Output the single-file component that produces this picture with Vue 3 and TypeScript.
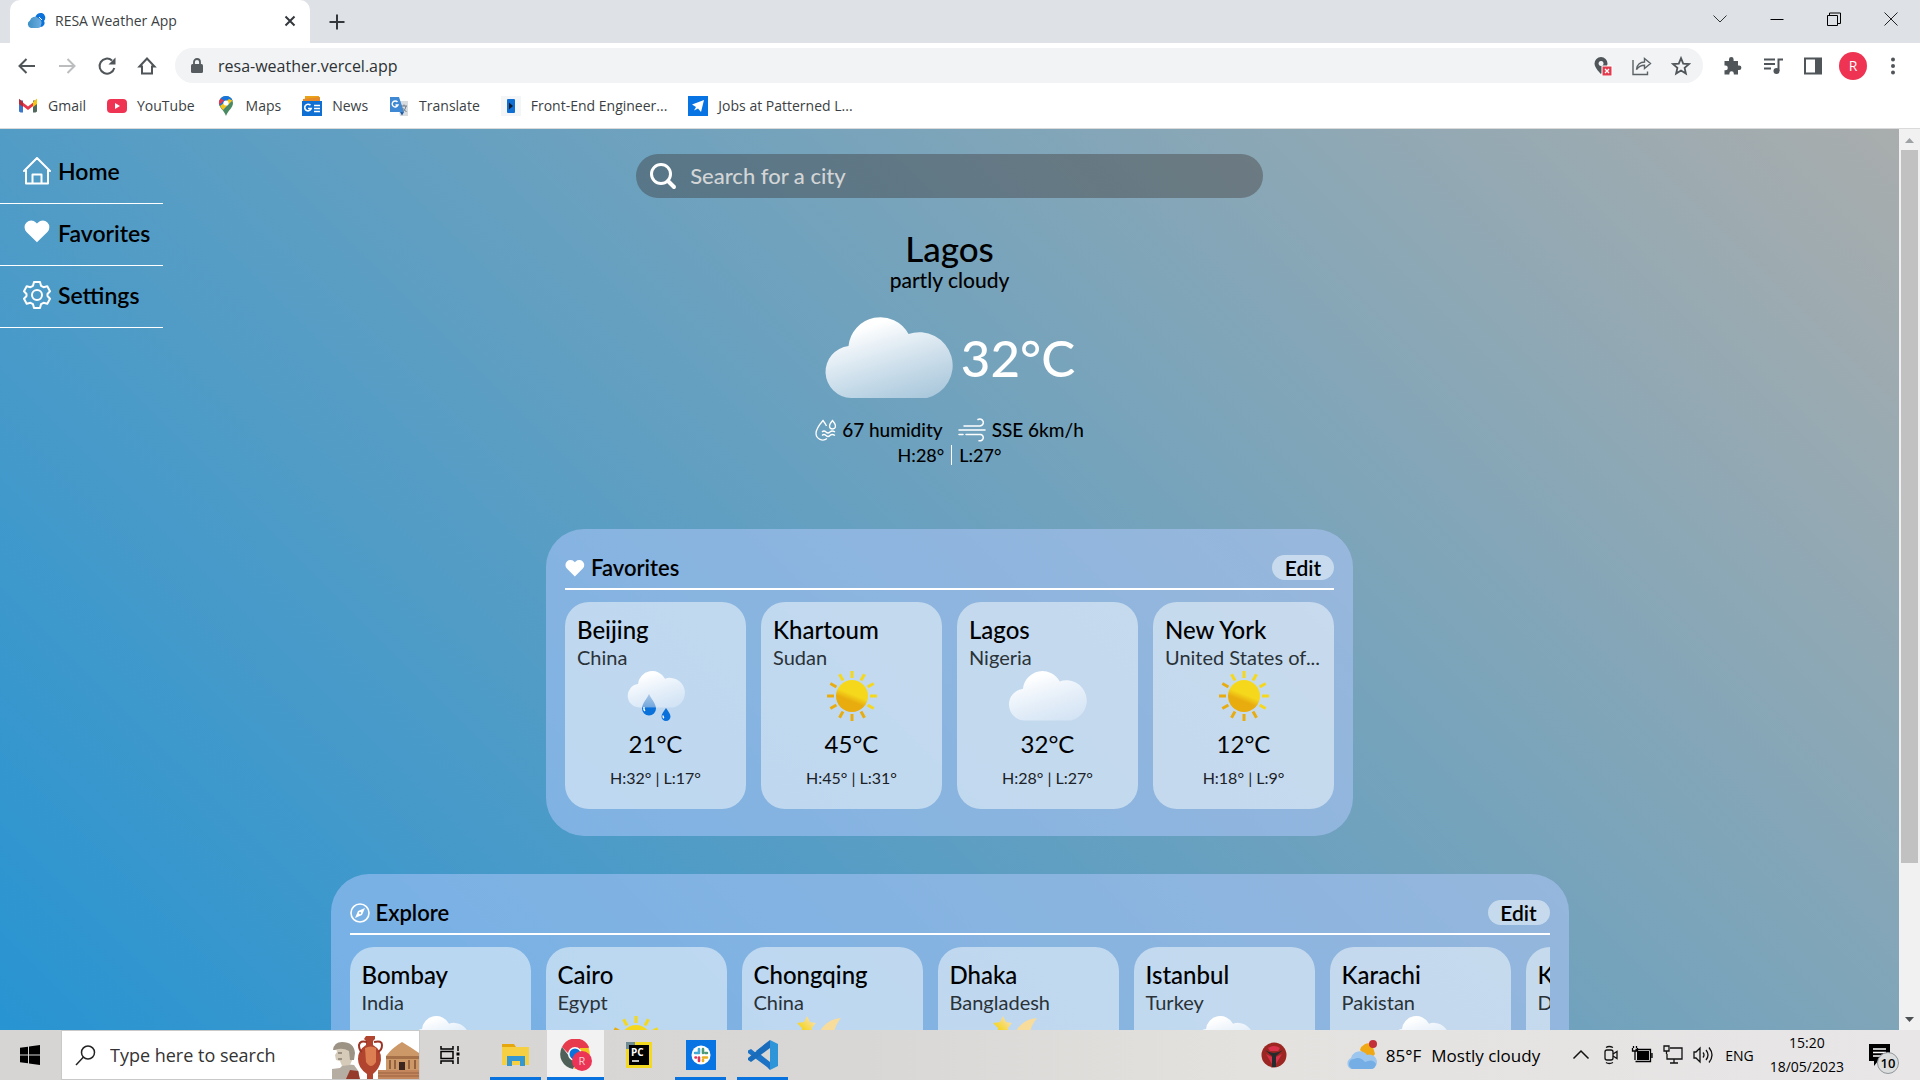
<script setup lang="ts">
import { ref } from 'vue'

type Sky = 'rain' | 'sun' | 'cloud' | 'night'

interface City {
  name: string
  country: string
  sky: Sky
  temp: number
  high: number
  low: number
}

const skyBox: Record<Sky, { w: number; h: number }> = {
  rain: { w: 58, h: 50 },
  sun: { w: 50, h: 50 },
  cloud: { w: 79, h: 50 },
  night: { w: 70, h: 50 },
}

const search = ref('')

const bookmarks = [
  { icon: 'gmail', label: 'Gmail' },
  { icon: 'youtube', label: 'YouTube' },
  { icon: 'maps', label: 'Maps' },
  { icon: 'news', label: 'News' },
  { icon: 'translate', label: 'Translate' },
  { icon: 'frontend', label: 'Front-End Engineer...' },
  { icon: 'jobs', label: 'Jobs at Patterned L...' },
]

const navItems = [
  { icon: 'house', label: 'Home' },
  { icon: 'heart', label: 'Favorites' },
  { icon: 'gear', label: 'Settings' },
]

const panels: { title: string; icon: string; size: string; cities: City[] }[] = [
  {
    title: 'Favorites',
    icon: 'heart',
    size: 'narrow',
    cities: [
      { name: 'Beijing', country: 'China', sky: 'rain', temp: 21, high: 32, low: 17 },
      { name: 'Khartoum', country: 'Sudan', sky: 'sun', temp: 45, high: 45, low: 31 },
      { name: 'Lagos', country: 'Nigeria', sky: 'cloud', temp: 32, high: 28, low: 27 },
      { name: 'New York', country: 'United States of...', sky: 'sun', temp: 12, high: 18, low: 9 },
    ],
  },
  {
    title: 'Explore',
    icon: 'compass',
    size: 'wide',
    cities: [
      { name: 'Bombay', country: 'India', sky: 'rain', temp: 31, high: 33, low: 28 },
      { name: 'Cairo', country: 'Egypt', sky: 'sun', temp: 30, high: 33, low: 19 },
      { name: 'Chongqing', country: 'China', sky: 'night', temp: 24, high: 29, low: 20 },
      { name: 'Dhaka', country: 'Bangladesh', sky: 'night', temp: 30, high: 36, low: 26 },
      { name: 'Istanbul', country: 'Turkey', sky: 'rain', temp: 18, high: 20, low: 13 },
      { name: 'Karachi', country: 'Pakistan', sky: 'rain', temp: 31, high: 34, low: 28 },
      { name: 'Kinshasa', country: 'DR Congo', sky: 'cloud', temp: 29, high: 31, low: 22 },
    ],
  },
]

const rays = Array.from({ length: 12 }, (_, i) => i * 30)
</script>

<template>
  <div class="screen">
    <svg class="defs" width="0" height="0" aria-hidden="true">
      <defs>
        <linearGradient id="g-cloud" x1="0.3" y1="0" x2="0.8" y2="1">
          <stop offset="0.1" stop-color="#fff" />
          <stop offset="1" stop-color="#e4eefa" stop-opacity="0.5" />
        </linearGradient>
        <linearGradient id="g-sun" x1="0.7" y1="0" x2="0.3" y2="1">
          <stop offset="0.45" stop-color="#f5d81c" />
          <stop offset="0.65" stop-color="#e8ac0e" />
        </linearGradient>
        <linearGradient id="g-drop" x1="0" y1="0" x2="0" y2="1">
          <stop offset="0" stop-color="#a9c8e6" />
          <stop offset="0.58" stop-color="#76a9de" />
          <stop offset="0.66" stop-color="#0a70da" />
        </linearGradient>
        <linearGradient id="g-star" x1="0" y1="1" x2="1" y2="0">
          <stop offset="0.2" stop-color="#f5d40e" />
          <stop offset="0.8" stop-color="#f8dfa0" />
        </linearGradient>
        <linearGradient id="g-fav" x1="0" y1="0" x2="1" y2="0">
          <stop offset="0" stop-color="#3c8fc4" />
          <stop offset="1" stop-color="#6faee0" />
        </linearGradient>
      </defs>
      <path id="cloud-shape" fill="url(#g-cloud)" d="M27 81A26.100 26.100 0 0 1 24.500 29A32 32 0 0 1 84.500 17A33.350 33.350 0 1 1 103 81Z" />
      <g id="sun-shape">
        <path v-for="r in rays" :key="r" d="M25 0V7" stroke-width="3" :transform="`rotate(${r} 25 25)`" :stroke="r > 120 && r < 330 ? '#e8ac0e' : '#f5d81c'" />
        <circle cx="25" cy="25" r="16" fill="url(#g-sun)" />
      </g>
      <path id="heart-shape" d="M12 22.500L2.300 12.900A6.200 6.200 0 0 1 2.300 4.200A6.200 6.200 0 0 1 11 4.200L12 5.200L13 4.200A6.200 6.200 0 0 1 21.700 4.200A6.200 6.200 0 0 1 21.700 12.900Z" />
    </svg>

    <header class="browser">
      <div class="tabstrip">
        <div class="tab">
          <svg width="20" height="20" viewBox="0 0 20 20"><path fill="#0b72dc" d="M9 8A6 6 0 0 1 16 2A5 5 0 0 1 18 10A4 4 0 0 1 15 16H8Z" /><path fill="url(#g-fav)" d="M5 17A4 4 0 0 1 4 9.500A5 5 0 0 1 12 7A5 5 0 0 1 15 14A3 3 0 0 1 12 17Z" /><path d="M13 6l3 3" stroke="#fff" /></svg>
          <span class="tab-title">RESA Weather App</span>
          <button class="bare" aria-label="Close tab"><svg width="14" height="14" viewBox="0 0 14 14"><path d="M2.500 2.500l9 9M11.500 2.500l-9 9" stroke="#34383c" stroke-width="2" /></svg></button>
        </div>
        <button class="bare newtab" aria-label="New tab"><svg width="18" height="18" viewBox="0 0 18 18"><path d="M9 1.500v15M1.500 9h15" stroke="#34383c" stroke-width="2" /></svg></button>
        <div class="window-buttons">
          <button class="bare" aria-label="Search tabs"><svg width="14" height="14" viewBox="0 0 14 14"><path d="M0.500 3.500L7 10L13.500 3.500" fill="none" stroke="#333" /></svg></button>
          <button class="bare" aria-label="Minimize"><svg width="14" height="14" viewBox="0 0 14 14"><path d="M0.500 7.500h13" stroke="#000" /></svg></button>
          <button class="bare" aria-label="Restore"><svg width="14" height="14" viewBox="0 0 14 14"><path d="M0.500 3.500h10v10h-10zM2.500 3.500v-2.500h11v10.500h-3" fill="none" stroke="#000" /></svg></button>
          <button class="bare" aria-label="Close window"><svg width="14" height="14" viewBox="0 0 14 14"><path d="M0.500 0.500l13 13M13.500 0.500l-13 13" stroke="#222" /></svg></button>
        </div>
      </div>

      <div class="toolbar">
        <button class="bare" aria-label="Back"><svg width="20" height="20" viewBox="0 0 20 20"><path d="M18 10H3M9.500 3L2.500 10l7 7" fill="none" stroke="#4f5559" stroke-width="2" /></svg></button>
        <button class="bare" aria-label="Forward"><svg width="20" height="20" viewBox="0 0 20 20"><path d="M2 10h15M10.500 3l7 7l-7 7" fill="none" stroke="#bbbdbf" stroke-width="2" /></svg></button>
        <button class="bare" aria-label="Reload"><svg width="20" height="20" viewBox="0 0 20 20"><path d="M17.300 12A7.500 7.500 0 1 1 15 4.500" fill="none" stroke="#4f5559" stroke-width="2" /><path d="M18.500 1.500v7h-7z" fill="#4f5559" /></svg></button>
        <button class="bare" aria-label="Home"><svg width="20" height="20" viewBox="0 0 20 20"><path d="M2.500 10.500L10 2.500l7.500 8H15V17.500H5V10.500Z" fill="none" stroke="#4f5559" stroke-width="2" /></svg></button>
        <div class="address">
          <svg width="12" height="16" viewBox="0 0 12 16"><rect y="6" width="12" height="9" rx="1.500" fill="#555b5f" /><path d="M3 6V4a3 3 0 0 1 6 0v2" fill="none" stroke="#555b5f" stroke-width="1.800" /></svg>
          <input class="url" aria-label="Address" value="resa-weather.vercel.app" />
          <svg width="20" height="20" viewBox="0 0 20 20"><path fill="#4f5559" fill-rule="evenodd" d="M8 1a6.500 6.500 0 0 1 6.500 6.500C14.500 12 8 18 8 18S1.500 12 1.500 7.500A6.500 6.500 0 0 1 8 1ZM8 5a2.500 2.500 0 1 0 .1 0Z" /><rect x="9" y="10" width="10" height="10" fill="#e33b4e" stroke="#fff" /><path d="M12 13l4 4M16 13l-4 4" stroke="#fff" stroke-width="1.300" /></svg>
          <svg width="20" height="20" viewBox="0 0 20 20"><path d="M1 4V18.500H15.500V15.500M4.500 13.500C5 8.500 8.500 6 12.500 6V2.500L18.500 7.500L12.500 12.500V9.200C9 9.200 6.500 10.500 4.500 13.500Z" fill="none" stroke="#5b6165" stroke-width="1.400" /></svg>
          <svg width="20" height="20" viewBox="0 0 20 20"><path d="M10 2.200l2.200 5.400 5.800.5-4.400 3.800 1.300 5.700L10 14.600 5.100 17.600l1.300-5.700L2 8.100l5.800-.5Z" fill="none" stroke="#4f5559" stroke-width="1.800" /></svg>
        </div>
        <div class="extensions">
          <svg width="20" height="20" viewBox="0 0 20 20"><path fill="#4f5559" d="M1.500 5H6V3.200a2.300 2.300 0 0 1 4.600 0V5H15v4.500h1.200a2.200 2.200 0 0 1 0 4.400H15V18.500h-4.200v-1a2.200 2.200 0 0 0-4.400 0v1H1.500v-4.300h1a2.300 2.300 0 0 0 0-4.600h-1Z" /></svg>
          <svg width="20" height="20" viewBox="0 0 20 20"><path d="M1 3.500h11M1 8h11M1 12.500h7M15.500 15V3.500H20" stroke="#4f5559" stroke-width="2" fill="none" /><circle cx="13.500" cy="15" r="3" fill="#4f5559" /></svg>
          <svg width="20" height="20" viewBox="0 0 20 20"><path d="M2 2.500h16v15H2Z" fill="none" stroke="#4f5559" stroke-width="2" /><path d="M12 2h6v16h-6z" fill="#4f5559" /></svg>
          <button class="avatar">R</button>
          <svg width="20" height="20" viewBox="0 0 20 20" fill="#4f5559"><circle cx="10" cy="3.500" r="2" /><circle cx="10" cy="10" r="2" /><circle cx="10" cy="16.500" r="2" /></svg>
        </div>
      </div>

      <nav class="bookmarks" aria-label="Bookmarks">
        <a v-for="b in bookmarks" :key="b.label" href="#" class="bookmark">
          <svg width="20" height="20" viewBox="0 0 20 20">
            <template v-if="b.icon === 'gmail'"><path d="M1 3.500L10 10.500L19 3.500V7L10 14L1 7Z" fill="#e5364a" /><path d="M1 4.500h4v12H2.500L1 15.500Z" fill="#3b78c9" /><path d="M15 4.500h4v11l-1.500 1H15Z" fill="#51685c" /><path d="M15 6l4-3.500V8l-4 3Z" fill="#f3c516" /><path d="M5 6L1 2.800V8l4 3Z" fill="#b52b38" /></template>
            <template v-else-if="b.icon === 'youtube'"><rect y="3" width="20" height="14" rx="4" fill="#ee3452" /><path d="M8 7v6l5-3z" fill="#fff" /></template>
            <template v-else-if="b.icon === 'maps'"><path d="M10 0a7 7 0 0 1 7 7c0 5-5 7-7 13C8 14 3 12 3 7a7 7 0 0 1 7-7Z" fill="#4a8a62" /><path d="M10 0a7 7 0 0 1 6.500 4.500L9 13 3.500 9.500C2 5 5 0 10 0Z" fill="#1774dc" /><path d="M3.300 9L8 4.500 4.500 2.500A7 7 0 0 0 3.300 9Z" fill="#e5364a" /><path d="M4 10l9-7 3.500 1.500L7 14Z" fill="#f3c516" /><circle cx="10" cy="7" r="2.600" fill="#fff" /></template>
            <template v-else-if="b.icon === 'news'"><path d="M3 0h14v6H3z" fill="#eaa319" /><path d="M1 3l17-2v6H1z" fill="#e58a28" /><path d="M0 5h20v15H0z" fill="#0f6fd2" /><path d="M8.500 9.300a3.300 3.300 0 1 0 .7 3.200H6M12 9.500h6M12 12.500h6M12 15.500h6" stroke="#fff" stroke-width="1.600" fill="none" /></template>
            <template v-else-if="b.icon === 'translate'"><path d="M8 5h11v15H11Z" fill="#d9dcdf" /><path d="M1 1h9l5 15H1z" fill="#3e88d4" /><path d="M11 16h4l-2 3.500z" fill="#1b5aa5" /><path d="M8.500 6a3 3 0 1 0 .5 3H6.500" stroke="#fff" stroke-width="1.400" fill="none" /><path d="M12 10h6M15 8.500V10M17 10c-.5 3-2 5-3.500 6M13.500 12l4 4" stroke="#6d7d89" fill="none" /></template>
            <template v-else-if="b.icon === 'frontend'"><rect width="20" height="20" fill="#f4f5f6" /><rect x="6" y="3" width="8" height="14" rx="1" fill="#0f6fd2" /><path d="M8 6.500L12 10L8 13.500Z" fill="#0b1a2c" /></template>
            <template v-else><rect width="20" height="20" fill="#0874e3" /><path d="M16 4L4 8.500l4 2.500-2 3.500 4-2 3 3.500Z" fill="#fff" /></template>
          </svg>
          {{ b.label }}
        </a>
      </nav>
    </header>

    <div class="viewport">
      <div class="page">
        <nav class="sidenav" aria-label="Main">
          <a v-for="n in navItems" :key="n.label" href="#">
            <svg width="28" height="28" viewBox="0 0 28 28" fill="none" stroke="#fff" stroke-width="2" stroke-linejoin="round" stroke-linecap="round">
              <path v-if="n.icon === 'house'" d="M1 14L14 1L27 14M3 13V26.500H25V13M9.500 26V17.500h9V26" />
              <use v-else-if="n.icon === 'heart'" href="#heart-shape" fill="#fff" stroke="none" transform="translate(1 -1) scale(1.080)" />
              <template v-else>
                <circle cx="14" cy="14" r="5" />
                <path d="M11 1H17L18 4.800L20.500 6.200L24.300 5.200L27 10.300L24.500 13V15L27 17.700L24.300 22.800L20.500 21.800L18 23.200L17 27H11L10 23.200L7.500 21.800L3.700 22.800L1 17.700L3.500 15V13L1 10.300L3.700 5.200L7.500 6.200L10 4.800Z" />
              </template>
            </svg>
            {{ n.label }}
          </a>
        </nav>

        <main class="content">
          <label class="search">
            <svg width="28" height="28" viewBox="0 0 28 28" fill="none" stroke="#fff" stroke-linecap="round"><circle cx="12" cy="12" r="9.500" stroke-width="3" /><path d="M19 19l6 6" stroke-width="4" /></svg>
            <input v-model="search" aria-label="Search for a city" placeholder="Search for a city" />
          </label>

          <section class="current">
            <h1>Lagos</h1>
            <p class="cond">partly cloudy</p>
            <div class="now">
              <svg width="129" height="81" viewBox="0 0 129 81"><use href="#cloud-shape" /></svg>
              <span>32°C</span>
            </div>
            <div class="facts">
              <span class="fact">
                <svg width="21" height="22" viewBox="0 0 21 22" fill="none" stroke="#fff" stroke-width="1.300"><path d="M11.500 7C10 4 8 1.500 8 1.500S1 9.500 1 14.500A6.800 6.800 0 0 0 12 19.500M17.500 1.500s-3 3.500-3 5.500a3 3 0 0 0 6 0c0-2-3-5.500-3-5.500ZM7 13q2-2 4 0t4 0 5 0M7 16.500q2-2 4 0t4 0 5 0" /></svg>
                67 humidity
              </span>
              <span class="fact">
                <svg width="28" height="24" viewBox="0 0 28 24" fill="none" stroke="#fff" stroke-width="1.500" stroke-linecap="round"><path d="M6 8H22a3.500 3.500 0 1 0-2-6.500M1 12H27M1 16.500h4M8 16.500h15a3.200 3.200 0 1 1-2 6.200" /></svg>
                SSE 6km/h
              </span>
            </div>
            <div class="range"><span>H:28°</span><span>L:27°</span></div>
          </section>

          <section v-for="p in panels" :key="p.title" class="panel" :class="p.size">
            <header>
              <svg width="20" height="20" viewBox="0 0 20 20">
                <use v-if="p.icon === 'heart'" href="#heart-shape" fill="#fff" transform="scale(0.820)" />
                <template v-else><circle cx="10" cy="10" r="9" fill="none" stroke="#fff" stroke-width="1.600" /><path fill="#fff" fill-rule="evenodd" d="M15 5L12 12L5 15L8 8ZM10 9a1 1 0 1 0 .1 0Z" /></template>
              </svg>
              <h2>{{ p.title }}</h2>
              <button>Edit</button>
            </header>
            <div class="cards">
              <article v-for="c in p.cities" :key="c.name" class="card">
                <h3>{{ c.name }}</h3>
                <p class="country">{{ c.country }}</p>
                <svg class="sky" :width="skyBox[c.sky].w" :height="skyBox[c.sky].h" :viewBox="`0 0 ${skyBox[c.sky].w} ${skyBox[c.sky].h}`">
                  <use v-if="c.sky === 'cloud'" href="#cloud-shape" transform="scale(0.612)" />
                  <use v-else-if="c.sky === 'sun'" href="#sun-shape" />
                  <template v-else-if="c.sky === 'rain'">
                    <use href="#cloud-shape" transform="scale(0.450)" />
                    <path fill="url(#g-drop)" d="M22 23C25 29 29 33 29 37.500A7 7 0 0 1 15 37.500C15 33 19 29 22 23Z" />
                    <path fill="#0a70da" d="M39 37C41 40 43.500 43 43.500 45.500A4.500 4.500 0 0 1 34.500 45.500C34.500 43 37 40 39 37Z" />
                    <path d="M17 36q-.5 3 1 4M36 44.500q0 2 1 2.500" stroke="#fff" stroke-width="1.500" fill="none" />
                  </template>
                  <template v-else>
                    <path fill="url(#g-star)" d="M10 0l3 6 6 1-4 5 1 7-6-3-6 3 1-7-5-5 7-1Z" />
                    <path fill="#f8dc9c" d="M44 2C30 3 20 14 20 27C20 40 30 50 43 50C52 50 60 45 63 37C40 42 28 22 44 2Z" />
                  </template>
                </svg>
                <p class="temp">{{ c.temp }}°C</p>
                <p class="hilo">H:{{ c.high }}° | L:{{ c.low }}°</p>
              </article>
            </div>
          </section>
        </main>
      </div>

      <div class="scrollbar" aria-hidden="true">
        <svg width="21" height="20" viewBox="0 0 21 20"><path d="M6 14h9l-4.500-5z" fill="#9ea2a5" /></svg>
        <div class="track"><div class="thumb"></div></div>
        <svg width="21" height="20" viewBox="0 0 21 20"><path d="M6 7h9l-4.500 5z" fill="#4d5154" /></svg>
      </div>
    </div>

    <footer class="taskbar">
      <button class="bare start" aria-label="Start"><svg width="20" height="20" viewBox="0 0 20 20"><path d="M0 2.800L8 1.700V9.500H0ZM9 1.500L20 0v9.500H9ZM0 10.500h8v7.800L0 17.200ZM9 10.500h11V20L9 18.500Z" /></svg></button>
      <label class="tasksearch">
        <svg width="21" height="21" viewBox="0 0 21 21" fill="none" stroke="#222" stroke-width="1.500"><circle cx="13" cy="7.500" r="6.500" /><path d="M8.500 12L1 20" /></svg>
        <input aria-label="Taskbar search" placeholder="Type here to search" />
        <svg class="art" width="87" height="43" viewBox="0 0 87 43">
          <path d="M0 43V33L8 32L12 28L22 29L27 36V43Z" fill="#b5aca2" /><path d="M14 43l4-9 8 1 2 8Z" fill="#963b2c" />
          <path d="M4 12L20 10L21 22L18 29L10 30L8 25L4 24L3 19L5 16Z" fill="#d6cbb9" /><path d="M1 14Q2 6 10 6Q22 6 23 17L22 24L18 24L17 15Q10 11 3 14Z" fill="#9d9385" /><path d="M6 17h4M6 23h4" stroke="#5f574d" />
          <path d="M34 0h9v3l-2 2v4q9 5 8 15-1 8-8 14v5h-6v-5q-9-6-9-15 0-9 8-14V5l-2-2Z" fill="#b1442e" /><path d="M33 12q6-3 11 0v14q-5 8-10 0Z" fill="#dc7d52" /><path d="M35 6q-7-2-8 3 0 5 3 7M42 6q8-2 8 3 0 5-4 7" fill="none" stroke="#9b3424" stroke-width="2" />
          <path d="M54 20Q60 12 70 6Q80 12 87 17V43H54Z" fill="#cd9868" /><path d="M54 20h33v3H54z" fill="#a56f47" /><path d="M58 24v9M63 24v9M77 24v9M83 24v9" stroke="#93613e" stroke-width="2" /><path d="M67 26h6v8h-6z" fill="#3a2520" /><path d="M46 34h41v9H46z" fill="#c4875d" /><path d="M46 37h41M46 40h41" stroke="#99603f" />
        </svg>
      </label>
      <div class="apps">
        <button class="app taskview" aria-label="Task view"><svg width="20" height="20" viewBox="0 0 20 20" fill="none" stroke="#000" stroke-width="1.500"><path d="M1 1v3h12V1M1 19v-3h12v3M1 6.500h12v7H1ZM18 1v5M18 12v7" /><path d="M16.500 7.500h3v3h-3z" fill="#000" stroke="none" /></svg></button>
        <button class="app running" aria-label="File Explorer"><svg width="28" height="24" viewBox="0 0 28 24"><path d="M0 1h12l2 3v5H0z" fill="#e6a70e" /><path d="M0 4h27v18H0z" fill="#f7cf43" /><path d="M5 23V13h18v10h-5v-5h-8v5Z" fill="#3597d1" /></svg></button>
        <button class="app running active" aria-label="Chrome">
          <svg width="32" height="32" viewBox="0 0 32 32"><path d="M2 8A15 15 0 0 1 29 8L28 10H15L8 14Z" fill="#e83a4d" /><path d="M2 8A15 15 0 0 0 13 30L17 21L9 17Z" fill="#4f6058" /><path d="M28.500 9A15 15 0 0 1 14 30L20 19L20 9Z" fill="#f4c91d" /><circle cx="15" cy="15" r="7" fill="#fff" /><circle cx="15" cy="15" r="5.500" fill="#0b72dc" /><circle cx="22" cy="22" r="10" fill="#ec3556" /><text x="22" y="26" font-family="Open Sans, sans-serif" font-size="11" text-anchor="middle" fill="#f5cdd3">R</text></svg>
        </button>
        <button class="app" aria-label="PyCharm"><svg width="26" height="26" viewBox="0 0 26 26"><path d="M0 0H26V26H0Z" fill="#f3d922" /><path d="M0 0h9v7H0z" fill="#6d8c93" /><rect x="3" y="3" width="20" height="20" fill="#000" /><text x="5" y="14" font-family="Open Sans, sans-serif" font-weight="700" font-size="10" fill="#fff">PC</text><path d="M6 19h7" stroke="#fff" stroke-width="1.500" /></svg></button>
        <button class="app running" aria-label="Slack"><svg width="30" height="30" viewBox="0 0 30 30"><rect width="30" height="30" fill="#0874e3" /><circle cx="15" cy="15" r="9.500" fill="#fff" /><g stroke-width="2.600" stroke-linecap="round"><path d="M13 9v3.500M9 13h4" stroke="#42acd6" /><path d="M17 9v4M21 13h-1.500" stroke="#4c9a77" /><path d="M17 17.500h4M17 21v-1" stroke="#e9b021" /><path d="M13 17.500V21M9.500 17.500H10" stroke="#e0365c" /></g></svg></button>
        <button class="app running" aria-label="Visual Studio Code"><svg width="30" height="30" viewBox="0 0 30 30"><path d="M22 0L8 13L3 9L0 10.500V13L19 27L22 30V22L8 11Z" fill="#1c72c4" /><path d="M22 0L0 18V20L3 22L22 8Z" fill="#186cbb" /><path d="M22 0L30 4V26L22 30Z" fill="#2e96d8" /></svg></button>
      </div>
      <div class="tray">
        <svg class="shield" width="26" height="26" viewBox="0 0 26 26"><circle cx="13" cy="13" r="12.500" fill="#9c2722" /><path d="M7 6Q13 2 19 6L17 9H9ZM5 12l6 3v7M21 12l-6 3v7" fill="#d9304b" /><path d="M4 8Q9 11 13 11T22 8L15 14V25H11V14Z" fill="#262b2d" /></svg>
        <svg class="weather-icon" width="32" height="30" viewBox="0 0 32 30"><path d="M14 10A9 9 0 0 1 26 4L29 14L24 20Z" fill="#f0a814" /><circle cx="27" cy="4" r="4" fill="#c3303a" /><path d="M5 29A6 6 0 0 1 5 18A9 9 0 0 1 21 15A7 7 0 0 1 26 29Z" fill="#9dc6ee" /><path d="M5 28A5 5 0 0 1 8 19Q14 16 19 22Q27 18 30 24Q29 29 25 29H6Z" fill="#74aee5" /></svg>
        <span class="temperature">85°F</span><span class="forecast">Mostly cloudy</span>
        <div class="status">
          <svg width="20" height="20" viewBox="0 0 20 20" fill="none" stroke="#111" stroke-width="1.500"><path d="M2.500 13.500L10 6l7.500 7.500" /></svg>
          <svg width="20" height="20" viewBox="0 0 20 20" fill="none" stroke="#111" stroke-width="1.300"><rect x="4" y="5" width="8" height="10" rx="2" /><path d="M12 9l4-2.500v7L12 11M5 2.500Q8 .5 12 2.500M5 17.500q3 2 7 0" /></svg>
          <svg width="22" height="20" viewBox="0 0 22 20"><path d="M6 6h12v9H6z" /><path d="M4.500 4.500h15v12h-15M21 8v5M1.500 3v3h5V3M4 6v9M2.500 1v2M5.500 1v2" fill="none" stroke="#000" stroke-width="1.300" /></svg>
          <svg width="20" height="20" viewBox="0 0 20 20" fill="none" stroke="#111" stroke-width="1.300"><path d="M7 3h12v11H4V9M11 14v4M7 18h8M1 1h5v5H1ZM3.500 6v3" /></svg>
          <svg width="20" height="20" viewBox="0 0 20 20" fill="none" stroke="#111" stroke-width="1.300"><path d="M1 7v6h2l4 4V3L3 7ZM10 7.500q2 2.500 0 5M13 5q4 5 0 10M16 2.500q6 7.500 0 15" /></svg>
        </div>
        <span class="lang">ENG</span>
        <time class="clock" datetime="2023-05-18T15:20"><span>15:20</span><span>18/05/2023</span></time>
        <button class="bare notify" aria-label="Notifications">
          <svg width="21" height="22" viewBox="0 0 21 22"><path d="M0 0h21v17H9l-4 5v-5H0Z" /><path d="M4 5h13M4 8.500h13M4 12h8" stroke="#fff" stroke-width="1.300" /></svg>
          <span class="badge">10</span>
        </button>
      </div>
    </footer>
  </div>
</template>

<style>
body {
  overflow: hidden;
}
</style>

<style scoped>
* {
  box-sizing: border-box;
}
.screen {
  display: flex;
  flex-direction: column;
  height: 100vh;
  font-family: "Open Sans", "Noto Sans", sans-serif;
  color: #000;
}
.defs {
  position: absolute;
}
svg {
  display: block;
  flex: none;
}
h1, h2, h3, p {
  margin: 0;
}
a {
  color: inherit;
  text-decoration: none;
}
button, input {
  font: inherit;
  color: inherit;
  border: 0;
  padding: 0;
  background: none;
  outline: 0;
}
input {
  min-width: 0;
}

/* Browser frame */
.browser {
  flex: none;
  background: #fff;
  border-bottom: 1px solid #dadada;
}
.tabstrip {
  display: flex;
  align-items: center;
  height: 43px;
  padding-left: 10px;
  background: #dee1e6;
}
.tab {
  display: flex;
  align-items: center;
  width: 300px;
  height: 43px;
  padding: 0 13px 2px 16px;
  background: #fff;
  border-radius: 10px 10px 0 0;
  font-size: 14px;
  color: #3b3f44;
}
.tab-title {
  flex: 1;
  margin-left: 9px;
}
.newtab {
  margin-left: 18px;
}
.window-buttons {
  display: flex;
  gap: 43px;
  margin: 0 22px 6px auto;
}
.toolbar {
  display: flex;
  align-items: center;
  gap: 20px;
  height: 45px;
  padding: 0 17px;
}
.address {
  display: flex;
  align-items: center;
  gap: 19px;
  flex: 1;
  height: 35px;
  margin-left: -2px;
  padding: 0 12px 0 16px;
  border-radius: 18px;
  background: #f1f3f4;
}
.url {
  flex: 1;
  font-size: 16px;
  color: #2d3135;
  margin-left: -4px;
}
.extensions {
  display: flex;
  align-items: center;
  gap: 20px;
}
.avatar {
  width: 28px;
  height: 28px;
  margin: 0 -4px;
  border-radius: 50%;
  background: #ee3452;
  color: #fff;
  font-size: 14px;
}
.bookmarks {
  display: flex;
  gap: 21px;
  height: 40px;
  padding: 0 18px 5px;
  font-size: 14px;
  color: #3b3f44;
}
.bookmark {
  display: flex;
  align-items: center;
  gap: 10px;
}

/* Weather page */
.viewport {
  display: flex;
  flex: 1;
  min-height: 0;
}
.page {
  position: relative;
  flex: 1;
  min-width: 0;
  overflow: hidden;
  background: linear-gradient(45deg, #2894d2, #a9adad);
  font-family: Lato, sans-serif;
}
.sidenav {
  position: absolute;
  top: 13px;
  left: 0;
  width: 163px;
}
.sidenav a {
  display: flex;
  align-items: center;
  gap: 7px;
  height: 62px;
  padding: 0 0 3px 23px;
  border-bottom: 1px solid #fff;
  font-size: 23px;
  font-weight: 600;
}
.content {
  display: flex;
  flex-direction: column;
  align-items: center;
  padding-top: 25px;
}
.search {
  display: flex;
  align-items: center;
  gap: 13px;
  width: 33%;
  height: 44px;
  padding: 0 12px 0 13px;
  border-radius: 22px;
  background: rgba(40, 20, 10, 0.3);
}
.search input {
  flex: 1;
  height: 44px;
  padding-bottom: 2px;
  font-size: 22px;
  font-weight: 500;
  color: #fff;
}
.search input::placeholder {
  color: #d3d5d6;
  opacity: 1;
}
.current {
  display: flex;
  flex-direction: column;
  align-items: center;
  margin-top: 31px;
  font-size: 19px;
  font-weight: 500;
  line-height: 24px;
}
h1 {
  font-size: 35px;
  font-weight: 500;
  line-height: 39px;
}
.cond {
  font-size: 21px;
  line-height: 23px;
}
.now {
  display: flex;
  align-items: center;
  gap: 8px;
  margin-top: 26px;
  color: #fff;
  font-size: 51px;
}
.facts {
  display: flex;
  gap: 15px;
  margin-top: 20px;
}
.fact {
  display: flex;
  align-items: center;
  gap: 6px;
}
.range {
  display: flex;
  margin-top: 3px;
  font-size: 18px;
  line-height: 20px;
}
.range span + span {
  margin-left: 7px;
  padding-left: 7px;
  border-left: 1px solid #fff;
}
.panel {
  width: 807px;
  margin-top: 38px;
  padding: 26px 19px 27px;
  border-radius: 38px;
  background: rgba(180, 202, 253, 0.5);
}
.current + .panel {
  margin-top: 64px;
}
.panel.wide {
  width: 1238px;
}
.panel header {
  display: flex;
  align-items: center;
  gap: 6px;
  padding-bottom: 8px;
  border-bottom: 2px solid #fff;
}
h2 {
  flex: 1;
  font-size: 22px;
  font-weight: 600;
  line-height: 24px;
}
.panel button {
  width: 62px;
  height: 25px;
  border-radius: 13px;
  background: rgba(250, 253, 253, 0.5);
  font-size: 21px;
  font-weight: 600;
  line-height: 24px;
}
.cards {
  display: flex;
  gap: 15px;
  margin-top: 12px;
  overflow: hidden;
}
.card {
  flex: none;
  display: flex;
  flex-direction: column;
  width: 181px;
  height: 207px;
  padding: 12px;
  border-radius: 24px;
  background: rgba(250, 253, 253, 0.5);
}
h3 {
  font-size: 24px;
  font-weight: 500;
  line-height: 32px;
}
.country {
  font-size: 20px;
  line-height: 22px;
  color: #2a3238;
  white-space: nowrap;
}
.sky {
  margin: 3px auto 8px;
}
.temp {
  font-size: 24px;
  line-height: 30px;
  text-align: center;
}
.hilo {
  margin-top: 7px;
  font-size: 16px;
  line-height: 24px;
  text-align: center;
  color: #1b2126;
}
.scrollbar {
  display: flex;
  flex-direction: column;
  flex: none;
  width: 21px;
  background: #f1f1f1;
}
.track {
  flex: 1;
  padding: 1px 2px;
}
.thumb {
  height: 83%;
  background: #c1c1c1;
}

/* Taskbar */
.taskbar {
  display: flex;
  flex: none;
  height: 50px;
  background: linear-gradient(90deg, #d6d5d4, #d8d7d5 45%, #e3e2df 65%, #e8e6e7);
}
.bare {
  display: block;
}
.start {
  padding: 0 21px 0 20px;
}
.tasksearch {
  display: flex;
  align-items: center;
  width: 359px;
  padding-left: 13px;
  border: 1px solid #c9c9c9;
  background: #fff;
}
.tasksearch input {
  flex: 1;
  margin-left: 14px;
  font-size: 18px;
}
.tasksearch input::placeholder {
  color: #333;
  opacity: 1;
}
.art {
  align-self: flex-end;
}
.apps {
  display: flex;
  gap: 11px;
}
.app {
  display: flex;
  align-items: center;
  justify-content: center;
  width: 51px;
  border-bottom: 3px solid transparent;
  padding-top: 3px;
}
.taskview {
  width: 59px;
}
.app.running {
  border-bottom-color: #0873df;
}
.app.active {
  width: 57px;
  margin: 0 -2px 0 -5px;
  background: #f2f2f2;
}
.tray {
  display: flex;
  align-items: center;
  margin-left: auto;
  font-size: 17px;
}
.shield {
  margin-right: 59px;
}
.weather-icon {
  margin-right: 8px;
}
.forecast {
  margin: 0 31px 0 10px;
}
.status {
  display: flex;
  gap: 10px;
  margin-right: 12px;
}
.lang {
  font-size: 14px;
}
.clock {
  display: flex;
  flex-direction: column;
  align-items: center;
  margin: 0 25px 0 16px;
  font-size: 14px;
  line-height: 24px;
}
.notify {
  position: relative;
  margin-right: 30px;
}
.badge {
  position: absolute;
  top: 8px;
  left: 8px;
  width: 22px;
  height: 22px;
  border: 1px solid #8f979c;
  border-radius: 50%;
  background: #dcdddd;
  font-size: 13px;
  font-weight: 600;
  line-height: 20px;
}
</style>
